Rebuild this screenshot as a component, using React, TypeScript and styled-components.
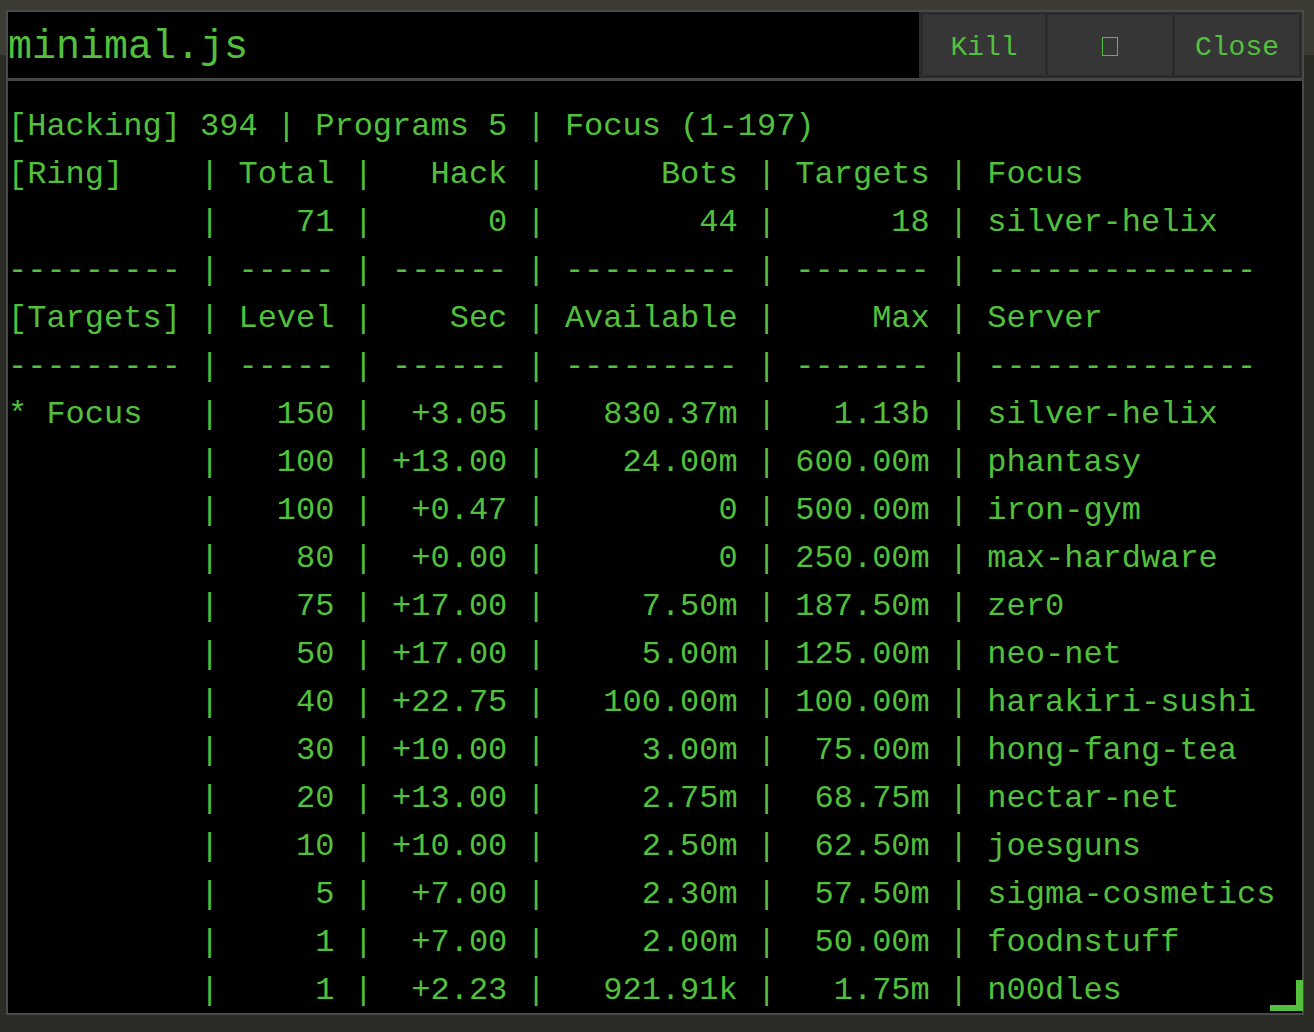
import React from "react";
import styled, { createGlobalStyle } from "styled-components";

const GREEN = "#52c03c";

const GlobalStyle = createGlobalStyle`
  html, body {
    margin: 0;
    padding: 0;
  }
  body {
    background: linear-gradient(#3d3c34 0 55px, #2c2c27 55px);
    min-height: 1032px;
    font-family: "Liberation Mono", "Courier New", monospace;
  }
`;

const Window = styled.div`
  position: relative;
  margin: 10px 0 0 6px;
  width: 1298px;
  border: 2px solid #4a4a4a;
  background: #3a3a3a;
  display: flex;
  flex-direction: column;
  box-sizing: border-box;
`;

const TitleBar = styled.div`
  display: flex;
  height: 66px;
  border-bottom: 3px solid #474747;
`;

const Title = styled.div`
  flex: 1;
  background: #000;
  color: ${GREEN};
  font-size: 40px;
  line-height: 72px;
  white-space: pre;
  overflow: hidden;
  border-right: 2px solid #2b2b2b;
`;

const Button = styled.button`
  flex: 0 0 127px;
  background: #363636;
  border: 3px solid #2b2b2b;
  border-left-width: ${(p: { $first?: boolean }) => (p.$first ? "2px" : "0")};
  color: ${GREEN};
  font-family: "Liberation Mono", "Courier New", monospace;
  font-size: 28px;
  padding: 5px 0 0;
  display: flex;
  align-items: center;
  justify-content: center;
  cursor: pointer;
`;

const MissingGlyph = styled.span`
  display: inline-block;
  width: 14px;
  height: 17px;
  margin-bottom: 3px;
  border: 1px solid ${GREEN};
`;

const Log = styled.div`
  background: #000;
  height: 932px;
  padding-top: 22px;
  box-sizing: border-box;
  overflow: hidden;
`;

const LogLine = styled.div`
  color: ${GREEN};
  font-size: 32px;
  line-height: 48px;
  white-space: pre;
`;

const ResizeHandle = styled.div`
  position: absolute;
  right: -1px;
  bottom: 2px;
  width: 26px;
  height: 25px;
  border-right: 7px solid ${GREEN};
  border-bottom: 6px solid ${GREEN};
`;

type Align = "l" | "r";
const widths = [9, 5, 6, 9, 7, 15];
const aligns: Align[] = ["l", "r", "r", "r", "r", "l"];

const fmt = (cells: string[]) =>
  cells
    .map((c, i) => (aligns[i] === "r" ? c.padStart(widths[i]) : i === cells.length - 1 ? c : c.padEnd(widths[i])))
    .join(" | ");

const dashes = fmt([9, 5, 6, 9, 7, 14].map((w) => "-".repeat(w)));

const targets: string[][] = [
  ["* Focus", "150", "+3.05", "830.37m", "1.13b", "silver-helix"],
  ["", "100", "+13.00", "24.00m", "600.00m", "phantasy"],
  ["", "100", "+0.47", "0", "500.00m", "iron-gym"],
  ["", "80", "+0.00", "0", "250.00m", "max-hardware"],
  ["", "75", "+17.00", "7.50m", "187.50m", "zer0"],
  ["", "50", "+17.00", "5.00m", "125.00m", "neo-net"],
  ["", "40", "+22.75", "100.00m", "100.00m", "harakiri-sushi"],
  ["", "30", "+10.00", "3.00m", "75.00m", "hong-fang-tea"],
  ["", "20", "+13.00", "2.75m", "68.75m", "nectar-net"],
  ["", "10", "+10.00", "2.50m", "62.50m", "joesguns"],
  ["", "5", "+7.00", "2.30m", "57.50m", "sigma-cosmetics"],
  ["", "1", "+7.00", "2.00m", "50.00m", "foodnstuff"],
  ["", "1", "+2.23", "921.91k", "1.75m", "n00dles"],
];

const lines: string[] = [
  "[Hacking] 394 | Programs 5 | Focus (1-197)",
  fmt(["[Ring]", "Total", "Hack", "Bots", "Targets", "Focus"]),
  fmt(["", "71", "0", "44", "18", "silver-helix"]),
  dashes,
  fmt(["[Targets]", "Level", "Sec", "Available", "Max", "Server"]),
  dashes,
  ...targets.map(fmt),
];

export default function App() {
  return (
    <>
      <GlobalStyle />
      <Window>
        <TitleBar>
          <Title>minimal.js</Title>
          <Button $first>Kill</Button>
          <Button>
            <MissingGlyph />
          </Button>
          <Button>Close</Button>
        </TitleBar>
        <Log>
          {lines.map((l, i) => (
            <LogLine key={i}>{l}</LogLine>
          ))}
        </Log>
        <ResizeHandle />
      </Window>
    </>
  );
}
